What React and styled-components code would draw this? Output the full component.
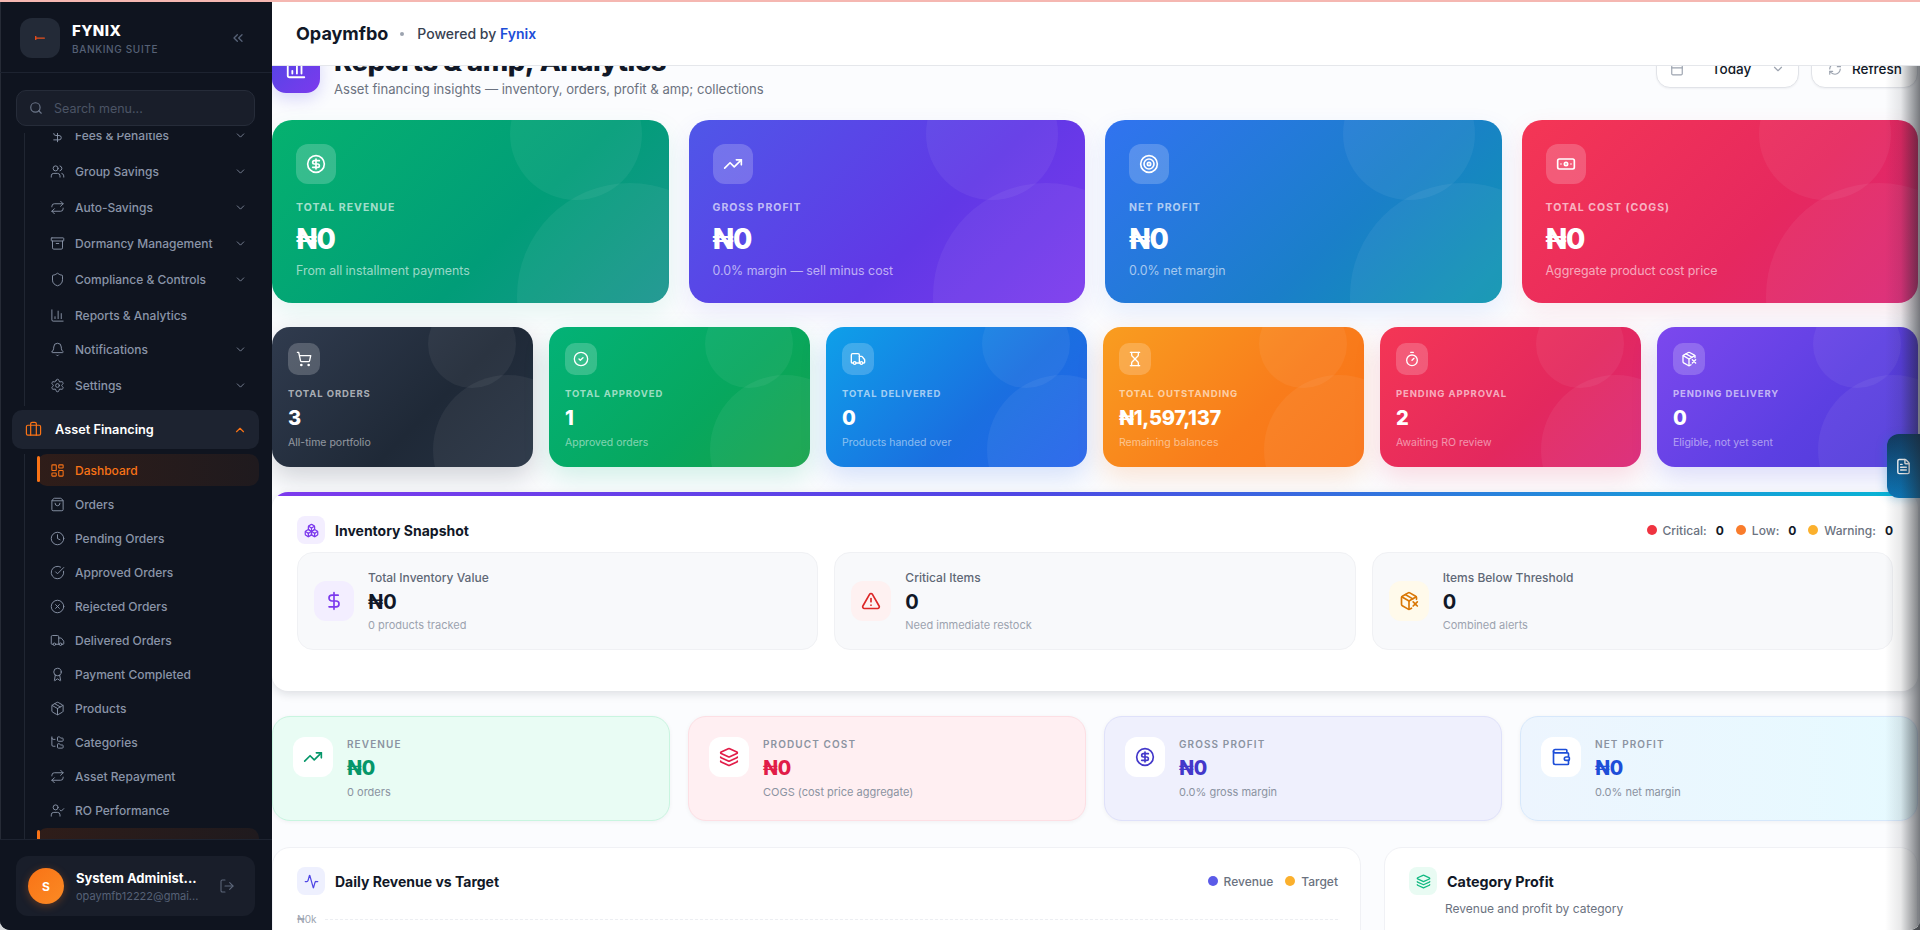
import React from 'react';
import styled, { createGlobalStyle } from 'styled-components';
import {
    Activity, Archive, Award, Banknote, BarChart3, Bell, Boxes, Briefcase, Calendar, ChevronDown,
    ChevronUp, ChevronsLeft, CircleCheck, CircleCheckBig, CircleDollarSign, CircleX, Clock, DollarSign,
    FileText, FolderTree, Hourglass, Layers, LayoutDashboard, LogOut, Package, PackageX, RefreshCw,
    Repeat, Search, Settings, Shield, ShoppingBag, ShoppingCart, Target, Timer, TrendingUp,
    TriangleAlert, Truck, UserCheck, Users, Wallet,
} from 'lucide-react';

const GlobalStyle = createGlobalStyle`
    html, body {
        margin: 0;
        padding: 0;
        height: 100%;
        overflow: hidden;
        background: #ffffff;
    }
    body, input {
        font-family: Inter, "Noto Sans", "Liberation Sans", sans-serif;
    }
    * {
        box-sizing: border-box;
    }
`;

const Shell = styled.div`
    position: relative;
    display: flex;
    width: 1920px;
    height: 930px;
    overflow: hidden;
    border-top: 2px solid #f5b7b1;
    background: linear-gradient(90deg, #d5d7da 50%, #4a4d52 50%);
`;

const Sidebar = styled.aside`
    width: 272px;
    flex-shrink: 0;
    display: flex;
    flex-direction: column;
    background: #0f141f;
    border-bottom-left-radius: 10px;
    box-shadow: inset 1px 0 0 #262b36;
`;

const Brand = styled.div`
    height: 71px;
    padding: 16px 26px 0 20px;
    display: flex;
    align-items: flex-start;
    gap: 12px;
    border-bottom: 1px solid #1d2330;
`;

const LogoBox = styled.div`
    width: 40px;
    height: 40px;
    border-radius: 12px;
    background: #232a37;
    display: flex;
    align-items: center;
    justify-content: center;
`;

const BrandText = styled.div`
    flex: 1;
    padding-top: 4px;
`;

const BrandName = styled.div`
    color: #fff;
    font-size: 15px;
    line-height: 18px;
    font-weight: 800;
    letter-spacing: 0.4px;
`;

const BrandSub = styled.div`
    margin-top: 2px;
    color: #566176;
    font-size: 10px;
    line-height: 14px;
    font-weight: 500;
    letter-spacing: 0.65px;
`;

const Collapse = styled.div`
    color: #566176;
    padding-top: 12px;
    display: flex;
`;

const SearchWrap = styled.div`
    padding: 17px 17px 7px 16px;
`;

const SearchBox = styled.div`
    height: 36px;
    padding: 0 12px;
    display: flex;
    align-items: center;
    gap: 11px;
    color: #6b7588;
    background: #191e2a;
    border: 1px solid #262c39;
    border-radius: 10px;
`;

const SearchInput = styled.input`
    flex: 1;
    min-width: 0;
    border: 0;
    outline: 0;
    padding: 0;
    background: transparent;
    font-size: 12.5px;
    color: #fff;
    &::placeholder {
        color: #4b5465;
    }
`;

const NavArea = styled.div`
    flex: 1;
    min-height: 0;
    overflow: hidden;
`;

const NavInner = styled.div`
    margin-top: -15.5px;
`;

const Branch = styled.div`
    margin-left: 24px;
    padding-left: 12px;
    border-left: 1px solid #202632;
`;

const NavRow = styled.div`
    height: ${p => p.$h || 36}px;
    display: flex;
    align-items: center;
    gap: 10px;
    padding: 0 12px 0 13px;
    margin-right: 13px;
    color: #8a94a8;
    font-size: 12px;
    font-weight: 500;
    white-space: nowrap;
`;

const NavLabel = styled.span`
    flex: 1;
`;

const SectionRow = styled.div`
    height: 39px;
    margin: 4.5px 13px 5px 12px;
    padding: 0 12px 0 13px;
    display: flex;
    align-items: center;
    gap: 13px;
    border-radius: 10px;
    background: #1d2330;
    color: #fff;
    font-size: 12.75px;
    font-weight: 600;
`;

const ActiveRow = styled(NavRow)`
    position: relative;
    height: 32px;
    margin-bottom: 1px;
    border-radius: 10px;
    color: #f97316;
    background: linear-gradient(90deg, #2f1d19, #1f1a1e);
    &::before {
        content: '';
        position: absolute;
        left: 0;
        top: 2px;
        width: 3px;
        height: 26px;
        border-radius: 2px;
        background: #f97316;
    }
`;

const NextActive = styled(ActiveRow)`
    margin-top: 1px;
`;

const Footer = styled.div`
    height: 91px;
    padding: 16px 17px 0 16px;
    border-top: 1px solid #1d2330;
    background: #0f141f;
    border-bottom-left-radius: 10px;
`;

const UserCard = styled.div`
    height: 60px;
    padding: 0 20px 0 12px;
    display: flex;
    align-items: center;
    gap: 12px;
    border-radius: 12px;
    background: #191e2a;
`;

const Avatar = styled.div`
    width: 36px;
    height: 36px;
    flex-shrink: 0;
    border-radius: 50%;
    display: flex;
    align-items: center;
    justify-content: center;
    color: #fff;
    font-size: 12px;
    font-weight: 700;
    background: linear-gradient(135deg, #f97316, #fb8a24);
    box-shadow: 0 2px 8px rgba(249, 115, 22, 0.3);
`;

const UserText = styled.div`
    flex: 1;
    min-width: 0;
`;

const UserName = styled.div`
    color: #fff;
    font-size: 13px;
    line-height: 17px;
    font-weight: 700;
    white-space: nowrap;
`;

const UserMail = styled.div`
    margin-top: 2px;
    color: #566176;
    font-size: 11px;
    line-height: 14px;
    white-space: nowrap;
`;

const LogoutIcon = styled(LogOut)`
    flex-shrink: 0;
    color: #5d677a;
`;

const Main = styled.main`
    flex: 1;
    min-width: 0;
    display: flex;
    flex-direction: column;
    overflow: hidden;
    background: #fbfcfe;
    border-bottom-right-radius: 10px;
`;

const TopBar = styled.header`
    position: relative;
    z-index: 2;
    height: 64px;
    flex-shrink: 0;
    padding: 0 24px;
    display: flex;
    align-items: center;
    background: #fff;
    border-bottom: 1px solid #e5e7eb;
`;

const TenantName = styled.div`
    color: #111827;
    font-size: 18px;
    font-weight: 700;
`;

const TopDot = styled.span`
    width: 4px;
    height: 4px;
    margin: 0 13px 0 12px;
    border-radius: 50%;
    background: #9ca3af;
`;

const Powered = styled.div`
    color: #374151;
    font-size: 14px;
    font-weight: 500;
`;

const FynixLink = styled.span`
    color: #1d4ed8;
    font-weight: 600;
`;

const Content = styled.div`
    flex: 1;
    min-height: 0;
    overflow: hidden;
`;

const Page = styled.div`
    margin-top: -21px;
    padding-right: 2px;
`;

const PageHead = styled.div`
    height: 75px;
    display: flex;
    align-items: flex-start;
`;

const PageIcon = styled.div`
    width: 48px;
    height: 48px;
    flex-shrink: 0;
    border-radius: 14px;
    display: flex;
    align-items: center;
    justify-content: center;
    color: #fff;
    background: linear-gradient(135deg, #4f46e5, #7c3aed);
    box-shadow: 0 6px 16px rgba(79, 70, 229, 0.2);
`;

const PageText = styled.div`
    flex: 1;
    padding-left: 14px;
`;

const PageTitle = styled.h1`
    margin: 1px 0 0;
    height: 33px;
    color: #111827;
    font-size: 27.5px;
    line-height: 30px;
    font-weight: 800;
    letter-spacing: -0.5px;
`;

const PageSub = styled.div`
    margin-top: 1px;
    color: #6b7280;
    font-size: 13.1px;
    line-height: 18px;
`;

const HeadActions = styled.div`
    display: flex;
    gap: 12px;
    padding-top: 5px;
`;

const HeadButton = styled.div`
    width: ${p => p.$w}px;
    height: 38px;
    padding: 0 ${p => p.$pad}px;
    display: flex;
    align-items: center;
    justify-content: ${p => p.$between ? 'space-between' : 'flex-start'};
    gap: 10px;
    color: #111827;
    font-size: 13.5px;
    font-weight: 500;
    background: #fff;
    border: 1px solid #e1e3e8;
    border-radius: 14px;
    box-shadow: 0 1px 2px rgba(17, 24, 39, 0.05);
`;

const HeadIcon = styled.span`
    display: flex;
    color: #9ca3af;
`;

const TodayText = styled.span`
    margin-left: 8px;
`;

const HeroGrid = styled.div`
    display: grid;
    grid-template-columns: repeat(4, 1fr);
    gap: 20px;
`;

const GradientCard = styled.div`
    position: relative;
    overflow: hidden;
    color: #fff;
    background: linear-gradient(135deg, ${p => p.$from}, ${p => p.$via} 60%, ${p => p.$to});
    box-shadow: 0 10px 26px ${p => p.$glow};
`;

const HeroCard = styled(GradientCard)`
    height: 183px;
    padding: 24px;
    border-radius: 20px;
`;

const SmallCard = styled(GradientCard)`
    height: 140px;
    padding: 16px;
    border-radius: 18px;
`;

const Bubble = styled.span`
    position: absolute;
    border-radius: 50%;
    background: rgba(255, 255, 255, 0.055);
    width: ${p => p.$size}px;
    height: ${p => p.$size}px;
    top: ${p => p.$top}px;
    right: ${p => p.$right}px;
`;

const GlassIcon = styled.div`
    position: relative;
    width: ${p => p.$size}px;
    height: ${p => p.$size}px;
    border-radius: ${p => p.$size > 32 ? 12 : 10}px;
    display: flex;
    align-items: center;
    justify-content: center;
    background: rgba(255, 255, 255, 0.2);
`;

const HeroLabel = styled.div`
    position: relative;
    margin-top: 17px;
    font-size: 10.5px;
    line-height: 13px;
    font-weight: 700;
    letter-spacing: 1px;
    color: rgba(255, 255, 255, 0.65);
`;

const HeroValue = styled.div`
    position: relative;
    margin-top: 7px;
    font-size: 28px;
    line-height: 36px;
    font-weight: 800;
    letter-spacing: -0.5px;
`;

const HeroSub = styled.div`
    position: relative;
    margin-top: 6px;
    font-size: 12.4px;
    line-height: 16px;
    color: rgba(255, 255, 255, 0.6);
`;

const SmallGrid = styled.div`
    display: grid;
    grid-template-columns: repeat(6, 1fr);
    gap: 16px;
    margin-top: 24px;
`;

const SmallLabel = styled.div`
    position: relative;
    margin-top: 13px;
    font-size: 9.5px;
    line-height: 12px;
    font-weight: 700;
    letter-spacing: 0.9px;
    white-space: nowrap;
    color: rgba(255, 255, 255, 0.62);
`;

const SmallValue = styled.div`
    position: relative;
    margin-top: 5px;
    font-size: 20px;
    line-height: 26px;
    font-weight: 800;
    letter-spacing: -0.3px;
`;

const SmallSub = styled.div`
    position: relative;
    margin-top: 5px;
    font-size: 10.5px;
    line-height: 14px;
    color: rgba(255, 255, 255, 0.5);
`;

const InventoryCard = styled.section`
    position: relative;
    overflow: hidden;
    margin-top: 25px;
    height: 199px;
    padding: 24px 25px 0;
    background: #fff;
    border-radius: 16px;
    box-shadow: 0 3px 10px rgba(17, 24, 39, 0.13);
    &::before {
        content: '';
        position: absolute;
        top: 0;
        left: 0;
        right: 0;
        height: 4px;
        background: linear-gradient(90deg, #7c3aed, #4f46e5 45%, #06b6d4);
    }
`;

const CardHead = styled.div`
    height: 28px;
    display: flex;
    align-items: center;
    justify-content: space-between;
`;

const CardTitleWrap = styled.div`
    display: flex;
    align-items: center;
    gap: 10px;
`;

const TitleIcon = styled.div`
    width: 28px;
    height: 28px;
    border-radius: 8px;
    display: flex;
    align-items: center;
    justify-content: center;
    color: ${p => p.$fg};
    background: ${p => p.$bg};
`;

const CardTitle = styled.h3`
    margin: 0;
    color: #111827;
    font-size: ${p => p.$size || 14}px;
    font-weight: 700;
`;

const Legend = styled.div`
    display: flex;
    align-items: center;
    gap: 12px;
    color: #6b7280;
    font-size: 12px;
    font-weight: 500;
`;

const LegendItem = styled.span`
    display: flex;
    align-items: center;
    gap: 6px;
`;

const LegendDot = styled.span`
    width: 10px;
    height: 10px;
    border-radius: 50%;
    background: ${p => p.$color};
`;

const LegendCount = styled.b`
    margin-left: 3px;
    color: #111827;
    font-weight: 700;
`;

const InvGrid = styled.div`
    display: grid;
    grid-template-columns: repeat(3, 1fr);
    gap: 16px;
    margin-top: 8px;
`;

const InvItem = styled.div`
    height: 98px;
    padding: 0 16px;
    display: flex;
    align-items: center;
    gap: 14px;
    background: #f8f9fb;
    border: 1px solid #f0f1f4;
    border-radius: 16px;
`;

const InvIcon = styled.div`
    width: 40px;
    height: 40px;
    flex-shrink: 0;
    border-radius: 12px;
    display: flex;
    align-items: center;
    justify-content: center;
    color: ${p => p.$fg};
    background: ${p => p.$bg};
`;

const InvLabel = styled.div`
    color: #5f6876;
    font-size: 12px;
    line-height: 16px;
    font-weight: 500;
`;

const InvValue = styled.div`
    margin-top: 3px;
    color: #111827;
    font-size: 20px;
    line-height: 26px;
    font-weight: 700;
`;

const InvSub = styled.div`
    margin-top: 3px;
    color: #9ca3af;
    font-size: 11px;
    line-height: 14px;
`;

const TintGrid = styled.div`
    display: grid;
    grid-template-columns: repeat(4, 1fr);
    gap: 18px;
    margin-top: 25px;
`;

const TintCard = styled.div`
    height: 105px;
    padding: 20px 20px 0;
    display: flex;
    align-items: flex-start;
    gap: 14px;
    border-radius: 18px;
    border: 1px solid ${p => p.$line};
    background: ${p => p.$bg};
    box-shadow: 0 1px 4px rgba(17, 24, 39, 0.05);
`;

const TintIcon = styled.div`
    width: 40px;
    height: 40px;
    flex-shrink: 0;
    border-radius: 12px;
    display: flex;
    align-items: center;
    justify-content: center;
    color: ${p => p.$fg};
    background: #fff;
`;

const TintLabel = styled.div`
    margin-top: 1px;
    color: #8b93a1;
    font-size: 10px;
    line-height: 13px;
    font-weight: 600;
    letter-spacing: 1.1px;
`;

const TintValue = styled.div`
    margin-top: 5px;
    color: ${p => p.$fg};
    font-size: 19.5px;
    line-height: 24px;
    font-weight: 800;
`;

const TintSub = styled.div`
    margin-top: 5px;
    color: #8b93a1;
    font-size: 11px;
    line-height: 14px;
`;

const ChartRow = styled.div`
    display: grid;
    grid-template-columns: 1089px 1fr;
    gap: 23px;
    margin-top: 26px;
`;

const ChartCard = styled.section`
    height: 200px;
    padding: 19px ${p => p.$padRight || 24}px 0 24px;
    background: #fff;
    border: 1px solid #f0f1f5;
    border-radius: 18px;
`;

const ChartSub = styled.div`
    margin: 6px 0 0 36px;
    color: #6b7280;
    font-size: 12px;
    line-height: 16px;
`;

const AxisRow = styled.div`
    display: flex;
    align-items: center;
    gap: 8px;
    margin-top: 18px;
    color: #9ca3af;
    font-size: 10px;
    line-height: 12px;
`;

const AxisLine = styled.div`
    flex: 1;
    border-top: 1px dashed #eceef2;
`;

const FloatButton = styled.div`
    position: absolute;
    right: 0;
    top: 432px;
    width: 33px;
    height: 64px;
    display: flex;
    align-items: center;
    justify-content: center;
    color: #fff;
    border-radius: 12px 0 0 12px;
    background: linear-gradient(160deg, #12385d, #0b82c9);
    box-shadow: -2px 2px 10px rgba(6, 130, 200, 0.25);
`;

const EdgeShade = styled.div`
    position: absolute;
    top: 0;
    right: 0;
    bottom: 0;
    width: 35px;
    pointer-events: none;
    border-bottom-right-radius: 10px;
    background: linear-gradient(90deg, rgba(30, 34, 40, 0), rgba(30, 34, 40, 0.1) 45%, rgba(30, 34, 40, 0.6));
`;

const sections = [
    { label: 'Fees & Penalties', icon: DollarSign, chev: true },
    { label: 'Group Savings', icon: Users, chev: true },
    { label: 'Auto-Savings', icon: Repeat, chev: true },
    { label: 'Dormancy Management', icon: Archive, chev: true },
    { label: 'Compliance & Controls', icon: Shield, chev: true },
    { label: 'Reports & Analytics', icon: BarChart3 },
    { label: 'Notifications', icon: Bell, chev: true, h: 32 },
    { label: 'Settings', icon: Settings, chev: true, h: 40 },
];

const assetItems = [
    { label: 'Orders', icon: ShoppingBag },
    { label: 'Pending Orders', icon: Clock },
    { label: 'Approved Orders', icon: CircleCheckBig },
    { label: 'Rejected Orders', icon: CircleX },
    { label: 'Delivered Orders', icon: Truck },
    { label: 'Payment Completed', icon: Award },
    { label: 'Products', icon: Package },
    { label: 'Categories', icon: FolderTree },
    { label: 'Asset Repayment', icon: Repeat },
    { label: 'RO Performance', icon: UserCheck },
];

const heroCards = [
    { label: 'TOTAL REVENUE', value: '₦0', sub: 'From all installment payments', icon: CircleDollarSign, from: '#05b16f', via: '#019d78', to: '#1a958f', glow: 'rgba(16, 185, 129, 0.1)' },
    { label: 'GROSS PROFIT', value: '₦0', sub: '0.0% margin — sell minus cost', icon: TrendingUp, from: '#4f57e8', via: '#6138e6', to: '#7c3aed', glow: 'rgba(79, 70, 229, 0.1)' },
    { label: 'NET PROFIT', value: '₦0', sub: '0.0% net margin', icon: Target, from: '#3173f0', via: '#1a7fc9', to: '#0e96b0', glow: 'rgba(37, 99, 235, 0.1)' },
    { label: 'TOTAL COST (COGS)', value: '₦0', sub: 'Aggregate product cost price', icon: Banknote, from: '#f43655', via: '#e6285f', to: '#db2777', glow: 'rgba(244, 63, 94, 0.1)' },
];

const smallCards = [
    { label: 'TOTAL ORDERS', value: '3', sub: 'All-time portfolio', icon: ShoppingCart, from: '#303b4e', via: '#1f2937', to: '#253142', glow: 'rgba(17, 24, 39, 0.18)' },
    { label: 'TOTAL APPROVED', value: '1', sub: 'Approved orders', icon: CircleCheck, from: '#03b277', via: '#07a75e', to: '#16a34a', glow: 'rgba(16, 185, 129, 0.18)' },
    { label: 'TOTAL DELIVERED', value: '0', sub: 'Products handed over', icon: Truck, from: '#0ea0e9', via: '#1a6fe0', to: '#2563eb', glow: 'rgba(37, 99, 235, 0.18)' },
    { label: 'TOTAL OUTSTANDING', value: '₦1,597,137', sub: 'Remaining balances', icon: Hourglass, from: '#f99d20', via: '#f97c1b', to: '#f97316', glow: 'rgba(249, 115, 22, 0.18)' },
    { label: 'PENDING APPROVAL', value: '2', sub: 'Awaiting RO review', icon: Timer, from: '#f43655', via: '#e3285e', to: '#db2777', glow: 'rgba(244, 63, 94, 0.18)' },
    { label: 'PENDING DELIVERY', value: '0', sub: 'Eligible, not yet sent', icon: PackageX, from: '#7c48ee', via: '#5c3fe2', to: '#4f3bd9', glow: 'rgba(79, 70, 229, 0.18)' },
];

const inventoryItems = [
    { label: 'Total Inventory Value', value: '₦0', sub: '0 products tracked', icon: DollarSign, fg: '#7c3aed', bg: '#f3eeff' },
    { label: 'Critical Items', value: '0', sub: 'Need immediate restock', icon: TriangleAlert, fg: '#dc2626', bg: '#fef1f1' },
    { label: 'Items Below Threshold', value: '0', sub: 'Combined alerts', icon: PackageX, fg: '#d97706', bg: '#fffaeb' },
];

const tintCards = [
    { label: 'REVENUE', value: '₦0', sub: '0 orders', icon: TrendingUp, fg: '#059669', bg: '#e9fcf4', line: '#c9f5e0' },
    { label: 'PRODUCT COST', value: '₦0', sub: 'COGS (cost price aggregate)', icon: Layers, fg: '#e11d48', bg: '#ffeff2', line: '#fddfe4' },
    { label: 'GROSS PROFIT', value: '₦0', sub: '0.0% gross margin', icon: CircleDollarSign, fg: '#4338ca', bg: '#eff0fd', line: '#dfe1fa' },
    { label: 'NET PROFIT', value: '₦0', sub: '0.0% net margin', icon: Wallet, fg: '#1d4ed8', bg: 'linear-gradient(90deg, #edf5fe, #e6faff)', line: '#d7e8fb' },
];

function LogoMark() {
    return (
        <svg width="10" height="4" viewBox="0 0 10 4">
            <rect x="0" y="0" width="1.4" height="4" fill="#e0471b" />
            <rect x="0" y="1.4" width="10" height="1.3" rx="0.6" fill="#e8511e" />
        </svg>
    );
}

function Sidenav() {
    return (
        <Sidebar>
            <Brand>
                <LogoBox><LogoMark /></LogoBox>
                <BrandText>
                    <BrandName>FYNIX</BrandName>
                    <BrandSub>BANKING SUITE</BrandSub>
                </BrandText>
                <Collapse><ChevronsLeft size={16} /></Collapse>
            </Brand>
            <SearchWrap>
                <SearchBox>
                    <Search size={14} />
                    <SearchInput placeholder="Search menu..." readOnly />
                </SearchBox>
            </SearchWrap>
            <NavArea>
                <NavInner>
                    <Branch>
                        {sections.map(item => (
                            <NavRow key={item.label} $h={item.h}>
                                <item.icon size={15} strokeWidth={1.5} />
                                <NavLabel>{item.label}</NavLabel>
                                {item.chev && <ChevronDown size={13} strokeWidth={1.5} />}
                            </NavRow>
                        ))}
                    </Branch>
                    <SectionRow>
                        <Briefcase size={17} strokeWidth={1.7} color="#f97316" />
                        <NavLabel>Asset Financing</NavLabel>
                        <ChevronUp size={14} color="#f97316" />
                    </SectionRow>
                    <Branch>
                        <ActiveRow>
                            <LayoutDashboard size={15} strokeWidth={1.7} />
                            <NavLabel>Dashboard</NavLabel>
                        </ActiveRow>
                        {assetItems.map(item => (
                            <NavRow key={item.label} $h={34}>
                                <item.icon size={15} strokeWidth={1.5} />
                                <NavLabel>{item.label}</NavLabel>
                            </NavRow>
                        ))}
                        <NextActive />
                    </Branch>
                </NavInner>
            </NavArea>
            <Footer>
                <UserCard>
                    <Avatar>S</Avatar>
                    <UserText>
                        <UserName>System Administ...</UserName>
                        <UserMail>opaymfb12222@gmai...</UserMail>
                    </UserText>
                    <LogoutIcon size={16} strokeWidth={1.6} />
                </UserCard>
            </Footer>
        </Sidebar>
    );
}

function Dashboard() {
    return (
        <Page>
            <PageHead>
                <PageIcon><BarChart3 size={22} /></PageIcon>
                <PageText>
                    <PageTitle>Reports &amp; amp; Analytics</PageTitle>
                    <PageSub>Asset financing insights — inventory, orders, profit &amp; amp; collections</PageSub>
                </PageText>
                <HeadActions>
                    <HeadButton $w={143} $pad={13} $between>
                        <HeadIcon><Calendar size={14} /></HeadIcon>
                        <TodayText>Today</TodayText>
                        <HeadIcon><ChevronDown size={14} /></HeadIcon>
                    </HeadButton>
                    <HeadButton $w={107} $pad={16}>
                        <HeadIcon><RefreshCw size={14} /></HeadIcon>
                        <span>Refresh</span>
                    </HeadButton>
                </HeadActions>
            </PageHead>

            <HeroGrid>
                {heroCards.map(card => (
                    <HeroCard key={card.label} $from={card.from} $via={card.via} $to={card.to} $glow={card.glow}>
                        <Bubble $size={132} $top={-52} $right={27} />
                        <Bubble $size={226} $top={63} $right={-74} />
                        <GlassIcon $size={40}><card.icon size={20} /></GlassIcon>
                        <HeroLabel>{card.label}</HeroLabel>
                        <HeroValue>{card.value}</HeroValue>
                        <HeroSub>{card.sub}</HeroSub>
                    </HeroCard>
                ))}
            </HeroGrid>

            <SmallGrid>
                {smallCards.map(card => (
                    <SmallCard key={card.label} $from={card.from} $via={card.via} $to={card.to} $glow={card.glow}>
                        <Bubble $size={88} $top={-27} $right={17} />
                        <Bubble $size={150} $top={48} $right={-50} />
                        <GlassIcon $size={32}><card.icon size={16} /></GlassIcon>
                        <SmallLabel>{card.label}</SmallLabel>
                        <SmallValue>{card.value}</SmallValue>
                        <SmallSub>{card.sub}</SmallSub>
                    </SmallCard>
                ))}
            </SmallGrid>

            <InventoryCard>
                <CardHead>
                    <CardTitleWrap>
                        <TitleIcon $fg="#7c3aed" $bg="#f3eeff"><Boxes size={15} /></TitleIcon>
                        <CardTitle>Inventory Snapshot</CardTitle>
                    </CardTitleWrap>
                    <Legend>
                        <LegendItem><LegendDot $color="#ef3340" />Critical: <LegendCount>0</LegendCount></LegendItem>
                        <LegendItem><LegendDot $color="#f97c2c" />Low: <LegendCount>0</LegendCount></LegendItem>
                        <LegendItem><LegendDot $color="#fbb02d" />Warning: <LegendCount>0</LegendCount></LegendItem>
                    </Legend>
                </CardHead>
                <InvGrid>
                    {inventoryItems.map(item => (
                        <InvItem key={item.label}>
                            <InvIcon $fg={item.fg} $bg={item.bg}><item.icon size={20} /></InvIcon>
                            <div>
                                <InvLabel>{item.label}</InvLabel>
                                <InvValue>{item.value}</InvValue>
                                <InvSub>{item.sub}</InvSub>
                            </div>
                        </InvItem>
                    ))}
                </InvGrid>
            </InventoryCard>

            <TintGrid>
                {tintCards.map(card => (
                    <TintCard key={card.label} $bg={card.bg} $line={card.line}>
                        <TintIcon $fg={card.fg}><card.icon size={20} /></TintIcon>
                        <div>
                            <TintLabel>{card.label}</TintLabel>
                            <TintValue $fg={card.fg}>{card.value}</TintValue>
                            <TintSub>{card.sub}</TintSub>
                        </div>
                    </TintCard>
                ))}
            </TintGrid>

            <ChartRow>
                <ChartCard $padRight={22}>
                    <CardHead>
                        <CardTitleWrap>
                            <TitleIcon $fg="#4f46e5" $bg="#eef0fe"><Activity size={15} /></TitleIcon>
                            <CardTitle>Daily Revenue vs Target</CardTitle>
                        </CardTitleWrap>
                        <Legend>
                            <LegendItem><LegendDot $color="#5b5be8" />Revenue</LegendItem>
                            <LegendItem><LegendDot $color="#fbb02d" />Target</LegendItem>
                        </Legend>
                    </CardHead>
                    <AxisRow>
                        <span>₦0k</span>
                        <AxisLine />
                    </AxisRow>
                </ChartCard>
                <ChartCard>
                    <CardHead>
                        <CardTitleWrap>
                            <TitleIcon $fg="#10b981" $bg="#e9fbf3"><Layers size={15} /></TitleIcon>
                            <CardTitle $size={14.3}>Category Profit</CardTitle>
                        </CardTitleWrap>
                    </CardHead>
                    <ChartSub>Revenue and profit by category</ChartSub>
                </ChartCard>
            </ChartRow>
        </Page>
    );
}

export default function App() {
    return (
        <Shell>
            <GlobalStyle />
            <Sidenav />
            <Main>
                <TopBar>
                    <TenantName>Opaymfbo</TenantName>
                    <TopDot />
                    <Powered>Powered by <FynixLink>Fynix</FynixLink></Powered>
                </TopBar>
                <Content>
                    <Dashboard />
                </Content>
            </Main>
            <FloatButton><FileText size={17} /></FloatButton>
            <EdgeShade />
        </Shell>
    );
}
